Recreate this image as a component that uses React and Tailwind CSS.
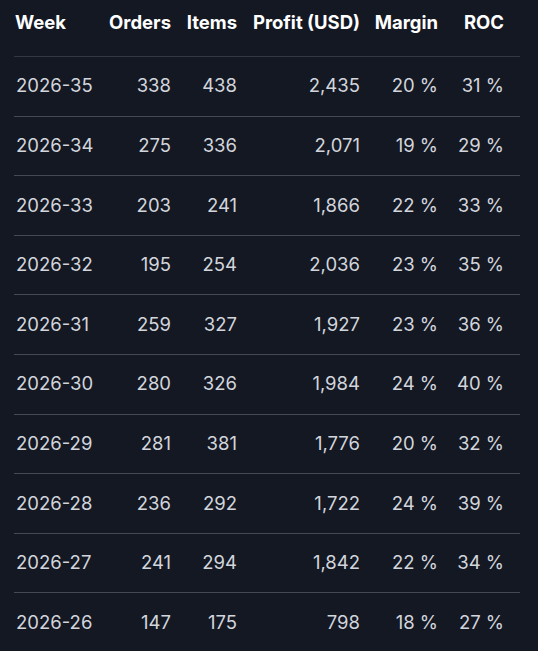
const ROWS = [
  ['2026-35', 338, 438, '2,435', '20 %', '31 %'],
  ['2026-34', 275, 336, '2,071', '19 %', '29 %'],
  ['2026-33', 203, 241, '1,866', '22 %', '33 %'],
  ['2026-32', 195, 254, '2,036', '23 %', '35 %'],
  ['2026-31', 259, 327, '1,927', '23 %', '36 %'],
  ['2026-30', 280, 326, '1,984', '24 %', '40 %'],
  ['2026-29', 281, 381, '1,776', '20 %', '32 %'],
  ['2026-28', 236, 292, '1,722', '24 %', '39 %'],
  ['2026-27', 241, 294, '1,842', '22 %', '34 %'],
  ['2026-26', 147, 175, '798', '18 %', '27 %'],
]

export default function App() {
  return (
    <div className="min-h-screen bg-[#141823] pl-[14px] pr-[18px] font-['Inter','Liberation_Sans',sans-serif]">
      <table className="w-[506px] table-fixed border-collapse">
        <colgroup>
          <col className="w-[88px]" />
          <col className="w-[77px]" />
          <col className="w-[66px]" />
          <col className="w-[123px]" />
          <col className="w-[78px]" />
          <col className="w-[74px]" />
        </colgroup>
        {/* Header */}
        <thead>
          <tr className="h-[56px] border-b border-[#343743] text-[18.5px] leading-6 font-bold text-white">
            <th className="pl-px pt-[10px] pb-[22px] text-left align-top">Week</th>
            <th className="pr-2 pt-[10px] pb-[22px] text-right align-top">Orders</th>
            <th className="pr-2 pt-[10px] pb-[22px] text-right align-top">Items</th>
            <th className="pr-2 pt-[10px] pb-[22px] text-right align-top whitespace-nowrap">Profit (USD)</th>
            <th className="pr-2 pt-[10px] pb-[22px] text-right align-top">Margin</th>
            <th className="pr-4 pt-[10px] pb-[22px] text-right align-top">ROC</th>
          </tr>
        </thead>
        <tbody className="text-[18.5px] text-[#d2d5dc]">
          {ROWS.map(r => (
            <tr key={r[0]} className="h-[59.6px] border-b border-[#464954] last:border-b-0">
              <td className="pl-[2px] text-left">{r[0]}</td>
              <td className="pr-2 text-right">{r[1]}</td>
              <td className="pr-2 text-right">{r[2]}</td>
              <td className="pr-2 text-right">{r[3]}</td>
              <td className="pr-2 text-right">{r[4]}</td>
              <td className="pr-4 text-right">{r[5]}</td>
            </tr>
          ))}
        </tbody>
      </table>
    </div>
  )
}
